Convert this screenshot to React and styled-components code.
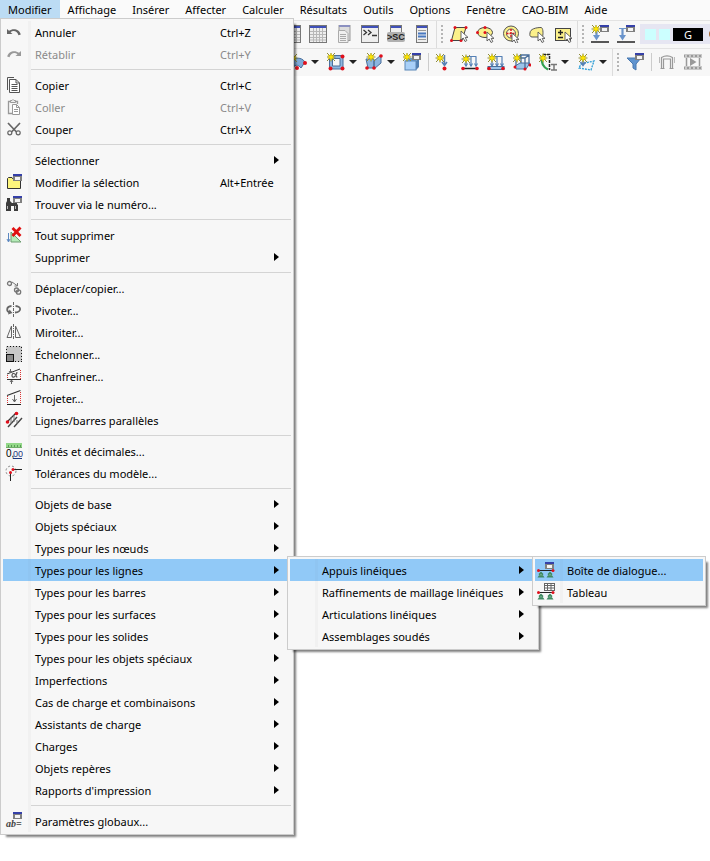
import React from 'react';
import styled, { createGlobalStyle } from 'styled-components';

const GlobalStyle = createGlobalStyle`
  *, *::before, *::after {
    box-sizing: border-box;
  }
  body {
    margin: 0;
    background: #fff;
    color: #000;
    font-family: "Noto Sans", "Open Sans", sans-serif;
    font-size: 11px;
    line-height: 16px;
    overflow: hidden;
  }
  button {
    margin: 0;
    padding: 0;
    border: none;
    background: transparent;
    color: inherit;
    font: inherit;
    text-align: left;
  }
`;

const Window = styled.div`
  min-height: 100vh;
  overflow: hidden;
`;

const MenuBar = styled.nav`
  display: flex;
  height: 20px;
  background: #fafafa;
`;

const MenuAnchor = styled.div`
  position: relative;
  z-index: 10;
`;

const MenuTitle = styled.button`
  height: 20px;
  padding: 0 8px;
  line-height: 20px;
  white-space: nowrap;
  background: ${props => props.$open ? '#bcdcf4' : 'transparent'};
`;

const Menu = styled.ul`
  position: absolute;
  top: ${props => props.$nested ? '-3px' : '18px'};
  left: ${props => props.$nested ? 'calc(100% - 4px)' : '0'};
  z-index: 1;
  width: ${props => props.$width}px;
  margin: 0;
  padding: 2px;
  list-style: none;
  background: #f7f7f7;
  border: 1px solid #ccc;
  box-shadow: 4px 4px 2px -2px rgba(0, 0, 0, 0.5);
`;

const Entry = styled.li`
  position: relative;
`;

const Item = styled.button`
  display: flex;
  align-items: center;
  width: 100%;
  height: 22px;
  padding-right: 12px;
  white-space: nowrap;
  color: ${props => props.disabled ? '#8a8a8a' : '#000'};
  background: ${props => props.$active ? '#91c9f7' : 'transparent'};
`;

const Gutter = styled.span`
  display: flex;
  align-items: center;
  flex: none;
  width: 28px;
  height: 22px;
  padding-left: 2px;
  border-right: 3px solid ${props => props.$active ? '#8fc5f2' : '#f1f1f1'};
`;

const Label = styled.span`
  flex: 1;
  padding: 2px 0 0 4px;
`;

const Shortcut = styled.span`
  width: 59px;
  padding-top: 2px;
`;

const Caret = styled.span`
  border: 4px solid transparent;
  border-left: 5px solid #000;
  border-right: none;
`;

const Separator = styled.li`
  display: flex;
  align-items: center;
  height: 9px;
  &::before {
    content: '';
    width: 28px;
    height: 9px;
    border-right: 3px solid #f1f1f1;
  }
  &::after {
    content: '';
    flex: 1;
    height: 1px;
    background: #d4d4d4;
  }
`;

const ToolBar = styled.div`
  display: flex;
  align-items: flex-start;
  height: 28px;
  padding-left: ${props => props.$start}px;
  background: #f7f7f7;
  border-top: 1px solid #e3e3e3;
`;

const Tool = styled.button`
  display: flex;
  align-items: center;
  justify-content: center;
  flex: none;
  width: 26px;
  height: 26px;
`;

const DropArrow = styled.button`
  flex: none;
  width: 12px;
  height: 26px;
  &::after {
    content: '';
    display: block;
    width: 8px;
    border: 4px solid transparent;
    border-top-color: #222;
    border-bottom: none;
  }
`;

const Divider = styled.span`
  flex: none;
  width: 6px;
  height: 26px;
  background: linear-gradient(#ccc, #ccc) center / 1px 18px no-repeat;
`;

const Grip = styled.span`
  display: flex;
  align-items: center;
  flex: none;
  width: 11px;
  height: 27px;
  padding-left: 1px;
  &::before {
    content: '';
    width: 1px;
    height: 27px;
    margin-right: 4px;
    background: #dcdcdc;
  }
  &::after {
    content: '';
    width: 2px;
    height: 20px;
    background: repeating-linear-gradient(#b5b5b5 0 2px, transparent 2px 4px);
  }
`;

const CaseSelect = styled.button`
  display: flex;
  align-items: center;
  flex: 1;
  gap: 3px;
  height: 20px;
  margin: 3px 0 0 1px;
  padding-left: 5px;
  overflow: hidden;
  background: #e6e6f2;
`;

const Swatch = styled.span`
  flex: none;
  width: 11px;
  height: 11px;
  background: #ccffff;
`;

const CaseTag = styled.span`
  flex: none;
  width: 30px;
  height: 13px;
  line-height: 13px;
  text-align: center;
  color: #fff;
  background: #000;
`;

const CaseDot = styled.span`
  flex: none;
  width: 8px;
  height: 8px;
  margin-left: 3px;
  border-radius: 4px;
  background: #a5622a;
`;

/* shared icon pieces */

const Svg = ({ children }) => (
  <svg width="18" height="18" viewBox="0 0 18 18" fill="none" aria-hidden="true">{children}</svg>
);

const MiniWindow = ({ x = 9, y = 1 }) => (
  <g shapeRendering="crispEdges">
    <rect x={x} y={y} width="9" height="7" fill="#808080" />
    <rect x={x} y={y} width="9" height="2" fill="#3540a8" />
    <rect x={x + 2} y={y + 3} width="5" height="3" fill="#f4f4f4" />
  </g>
);

const Frame = ({ x = 0, width = 18, height = 18 }) => (
  <g shapeRendering="crispEdges">
    <rect x={x} y="0" width={width} height={height} fill="#777" />
    <rect x={x + 1} y="1" width={width - 2} height="2" fill="#3f50b8" />
    <rect x={x + 1} y="3" width={width - 2} height={height - 4} fill="#eee" />
  </g>
);

const Star = ({ x = 4, y = 5 }) => (
  <g transform={`translate(${x} ${y})`}>
    <path d="M-4-4L4 4M4-4L-4 4M0-4.5V4.5M-4.5 0H4.5" stroke="#8d8a3c" strokeWidth="1" />
    <path d="M0-3.500L1-1 3-2 1.800 0 3 2 1 1 0 3.500-1 1-3 2-1.800 0-3-2-1-1Z" fill="#ffe600" stroke="#d8c400" strokeWidth="0.500" />
  </g>
);

const Cursor = ({ x = 10, y = 7 }) => (
  <path
    transform={`translate(${x} ${y})`}
    d="M0 0V9L2.2 7 4 10.5 5.8 9.6 4.2 6.4H7Z"
    fill="#fff"
    stroke="#555"
    strokeWidth="0.9"
  />
);

const Dots = ({ points, r = 1.5 }) => points.map(([x, y]) => (
  <circle key={`${x}-${y}`} cx={x} cy={y} r={r} fill="#e0101c" />
));

const Supports = () => (
  <g>
    <path d="M1 9.500H16" stroke="#222" />
    <path d="M4 10.500L6.500 13 5.800 14 7.500 16.500H0.500L2.200 14 1.500 13ZM13 10.500L15.500 13 14.800 14 16.500 16.500H9.500L11.200 14 10.500 13Z" fill="#3f8a62" />
    <path d="M3 14.500L4 13.500 5 14.500M12 14.500L13 13.500 14 14.500" stroke="#9fd0b2" />
    <Dots points={[[1.5, 9.5], [16, 9.5]]} />
  </g>
);

const LoadArrows = () => (
  <g stroke="#5580b5" strokeWidth="1.200">
    <path d="M4 3.500H15.500M5 4V13M10 4V13M15 4V13" />
    <path d="M3.500 10.500L5 13 6.500 10.500M8.500 10.500L10 13 11.500 10.500M13.500 10.500L15 13 16.500 10.500" />
  </g>
);

/* menu icons */

const UndoIcon = () => (
  <Svg>
    <path d="M2 6V11H7.500L5.500 9.200C8 7.200 12 7.600 13.500 12.200L15.800 11.500C14.500 6 8 4.800 4 7.800Z" fill="#666" />
  </Svg>
);

const RedoIcon = () => (
  <Svg>
    <path d="M16 6V11H10.500L12.500 9.200C10 7.200 6 7.600 4.500 12.200L2.200 11.500C3.500 6 10 4.800 14 7.800Z" fill="#999" />
  </Svg>
);

const CopyIcon = () => (
  <Svg>
    <path d="M2.500 14V1.500H9" stroke="#555" />
    <path d="M4.500 3.500H11L14.500 7V16.500H4.500Z" fill="#fff" stroke="#555" />
    <path d="M11 3.500V7H14.500M6.500 8.500H12.500M6.500 10.500H12.500M6.500 12.500H12.500M6.500 14.500H12.500" stroke="#555" />
  </Svg>
);

const PasteIcon = () => (
  <Svg>
    <path d="M7 15.500H3.500V3.500H12.500V6" stroke="#999" strokeWidth="1.300" />
    <path d="M5.500 4.500V2.500H7L8 1.500 9 2.500H10.500V4.500Z" fill="#eee" stroke="#999" />
    <path d="M7.500 6.500H11.500L14.500 9.500V16.500H7.500Z" fill="#fff" stroke="#999" />
    <path d="M11.500 6.500V9.500H14.500M9 11.500H13M9 13.500H13" stroke="#999" />
  </Svg>
);

const CutIcon = () => (
  <Svg>
    <path d="M3 3L11.500 12M15 3L6.500 12" stroke="#666" strokeWidth="1.700" />
    <circle cx="4.800" cy="12.800" r="2" stroke="#666" strokeWidth="1.200" />
    <circle cx="13.200" cy="12.800" r="2" stroke="#666" strokeWidth="1.200" />
  </Svg>
);

const EditSelectionIcon = () => (
  <Svg>
    <path d="M2.500 15.500V5.500L3.500 4.500H7L8 6H15.500V15.500Z" fill="#fdf57c" stroke="#333" />
    <MiniWindow x={8} />
  </Svg>
);

const FindIcon = () => (
  <Svg>
    <path d="M2 3H5V6L7 8H9V5H12V9L13 10V16H9V11H6V16H1V8L2 6Z" fill="#3c3c3c" />
    <path d="M2.500 11V14M10.500 11V14" stroke="#bbb" />
    <MiniWindow x={8} />
  </Svg>
);

const DeleteAllIcon = () => (
  <Svg>
    <path d="M3.500 7V15M2 13L3.500 16 5 13" stroke="#5b87c0" />
    <path d="M6 6V16H16Z" fill="#b5ecb8" stroke="#6d9c70" />
    <path d="M7.500 2L15.500 10M15.500 1.500L7.500 10" stroke="#e01010" strokeWidth="2.800" />
  </Svg>
);

const MoveIcon = () => (
  <Svg>
    <circle cx="4.500" cy="4.500" r="2" stroke="#777" strokeWidth="1.300" />
    <circle cx="11.500" cy="11" r="2" stroke="#777" strokeWidth="1.300" />
    <circle cx="13.500" cy="13" r="2.200" stroke="#777" strokeWidth="1.300" />
    <path d="M7 3L12 6.500M12.500 4V7H9.500" stroke="#777" />
  </Svg>
);

const RotateIcon = () => (
  <Svg>
    <path d="M8.500 1V17" stroke="#666" strokeDasharray="3 1 1 1" />
    <path d="M6.500 5C1 5.500 1 10.500 5 11.500M10.500 5C17 5.500 16.500 11 10 11.500" stroke="#666" strokeWidth="1.800" />
    <path d="M3 13.500L7.500 12 4.500 8.500Z" fill="#666" />
  </Svg>
);

const MirrorIcon = () => (
  <Svg>
    <path d="M8.500 1V17" stroke="#666" strokeDasharray="3 1 1 1" />
    <path d="M6.500 3V14.500H2ZM10.500 3V14.500H15.500Z" stroke="#666" />
  </Svg>
);

const ScaleIcon = () => (
  <Svg>
    <g shapeRendering="crispEdges">
      <rect x="1" y="1" width="16" height="16" fill="#c8c8c8" />
      <rect x="1.500" y="1.500" width="15" height="15" stroke="#111" strokeDasharray="1 2" />
      <rect x="1.500" y="9.500" width="7" height="7" fill="#888" stroke="#111" />
    </g>
  </Svg>
);

const ChamferIcon = () => (
  <Svg>
    <path d="M2 7L15 2M2 12.500H16" stroke="#333" />
    <path d="M2.500 8V12M15.500 3V12" stroke="#d33" strokeDasharray="1 1" />
    <path d="M12 5C11 10.500 7 11.500 7 8.500 7 5.500 10.500 5.500 12 10.500" stroke="#555" strokeWidth="1.200" />
    <path d="M5.500 2V6M4 4L5.500 6 7 4M6.500 17V13M5 15L6.500 13 8 15" stroke="#666" />
  </Svg>
);

const ProjectIcon = () => (
  <Svg>
    <path d="M2 6.500L15.500 1.500" stroke="#333" strokeWidth="1.200" />
    <path d="M2 15.500H16" stroke="#222" />
    <path d="M2.500 7V15M15.500 3V15" stroke="#d33" strokeDasharray="1 1" />
    <path d="M9.500 6V13M7.500 10L9.500 13 11.500 10" stroke="#666" />
  </Svg>
);

const ParallelIcon = () => (
  <Svg>
    <path d="M2 11L11 2" stroke="#333" strokeWidth="1.300" />
    <path d="M3 16L12 6M9 16L17 7" stroke="#444" strokeWidth="1.400" />
    <path d="M6 6V13M9 4V11M12 9V13" stroke="#777" />
    <Dots points={[[2.5, 11], [11.5, 2.5]]} r={1.8} />
  </Svg>
);

const SvgText = styled.text`
  font-family: ${props => props.$serif ? '"Liberation Serif", serif' : '"Liberation Sans", sans-serif'};
  font-size: ${props => props.$size}px;
  font-style: ${props => props.$serif ? 'italic' : 'normal'};
  font-weight: ${props => props.$bold ? 'bold' : 'normal'};
`;

const UnitsIcon = () => (
  <Svg>
    <rect x="1" y="1" width="16" height="5" fill="#93d889" />
    <path d="M1 5.500H17" stroke="#6fae68" />
    <path d="M3.500 3V5M6.500 3V5M9.500 3V5M12.500 3V5M15.500 3V5" stroke="#5a9c55" />
    <SvgText x="1" y="15" $size={10} fill="#000">0,</SvgText>
    <SvgText x="8" y="15" $size={9} fill="#1f3a80">00</SvgText>
    <path d="M8 16.500H17" stroke="#1f3a80" />
  </Svg>
);

const ToleranceIcon = () => (
  <Svg>
    <circle cx="6" cy="7" r="5" stroke="#888" strokeDasharray="2 2" />
    <path d="M8 5.500H17M5.500 9V17" stroke="#222" />
    <Dots points={[[8, 5.5], [5.5, 8.5]]} />
  </Svg>
);

const GlobalParamsIcon = () => (
  <Svg>
    <MiniWindow x={8} y={0} />
    <SvgText x="1" y="15" $size={10} $serif $bold fill="#444">ab=</SvgText>
  </Svg>
);

const SupportDialogIcon = () => (
  <Svg>
    <Supports />
    <MiniWindow x={8} />
  </Svg>
);

const SupportTableIcon = () => (
  <Svg>
    <Supports />
    <rect x="7.500" y="0.500" width="10" height="7" fill="#fff" stroke="#666" />
    <path d="M7.500 2.500H17.500M7.500 5H17.500M10.500 0.500V7.500M14 0.500V7.500" stroke="#666" />
  </Svg>
);

/* toolbar icons */

const TableIcon = () => (
  <Svg>
    <Frame />
    <path d="M1 6.500H17M1 9.500H17M1 12.500H17M1 15H17M4.500 3V17M7.500 3V17M10.500 3V17M13.500 3V17" stroke="#b8b8b8" />
  </Svg>
);

const ReportIcon = () => (
  <Svg>
    <rect x="4" y="0.500" width="11" height="15" fill="#ddd" stroke="#999" />
    <rect x="4" y="0" width="11" height="2" fill="#8b90c0" />
    <path d="M3.500 5.500H10L13 8.500V17.500H3.500Z" fill="#f0f0f0" stroke="#aaa" />
    <path d="M5 9.500H11M5 11.500H11M5 13.500H11M5 15.500H11" stroke="#aaa" />
  </Svg>
);

const ConsoleIcon = () => (
  <Svg>
    <Frame />
    <path d="M2.500 5L5.500 7.500 2.500 10M7 5L10 7.500 7 10M11 10.500H16" stroke="#333" strokeWidth="1.300" />
  </Svg>
);

const ScriptIcon = () => (
  <Svg>
    <Frame x={3} width={12} height={10} />
    <rect x="0" y="7" width="18" height="10" rx="2" fill="#b0b0b0" />
    <SvgText x="0" y="15" $size={9} $bold fill="#222">&gt;SC</SvgText>
  </Svg>
);

const NavigatorIcon = () => (
  <Svg>
    <Frame x={3} width={12} />
    <path d="M5 5.500H13M5 14.500H13" stroke="#999" />
    <path d="M5 8.500H13M5 11.500H13" stroke="#4878c0" strokeWidth="2" />
  </Svg>
);

const SelectPolygonIcon = () => (
  <Svg>
    <path d="M5 2.500H16L12 15.500H1.500Z" fill="#fbf08a" stroke="#444" />
    <Dots points={[[5, 2.5], [16, 2.5], [1.5, 15.5], [11, 15.5]]} />
    <Cursor x={11} y={6} />
  </Svg>
);

const SelectEllipseIcon = () => (
  <Svg>
    <ellipse cx="9" cy="7.500" rx="7.500" ry="5" fill="#fbf08a" stroke="#444" />
    <Dots points={[[1.5, 7.5], [9, 7.5], [9, 2.5]]} />
    <Cursor x={11} y={7} />
  </Svg>
);

const SelectRingIcon = () => (
  <Svg>
    <circle cx="9" cy="8.500" r="7.500" fill="#fbf08a" stroke="#555" />
    <circle cx="9" cy="8.500" r="4.500" fill="#fff8d0" stroke="#555" />
    <path d="M9 4V13M4.500 8.500H13.500" stroke="#e0101c" strokeWidth="1.500" strokeDasharray="2 1" />
    <Cursor x={10} y={8} />
  </Svg>
);

const SelectLassoIcon = () => (
  <Svg>
    <path d="M2 8C2 4 8 2.500 13 2.500 15 2.500 15.500 8 14.500 12H4C2 12 1.500 10 2 8Z" fill="#fbf08a" stroke="#555" />
    <Cursor x={10} y={7} />
  </Svg>
);

const SelectValueIcon = () => (
  <Svg>
    <rect x="1.500" y="3.500" width="15" height="12" fill="#fbf08a" stroke="#444" />
    <path d="M4 7.500H9M6.500 5V10M4 12.500H9" stroke="#222" strokeWidth="1.300" />
    <Cursor x={11} y={7} />
  </Svg>
);

const LoadCaseIcon = ({ isNew }) => (
  <Svg>
    <path d="M5.500 3V12" stroke="#6a94cc" strokeWidth="2.200" />
    <path d="M2 10H9L5.500 15.500Z" fill="#6a94cc" />
    <path d="M0 17H18" stroke="#222" strokeWidth="1.500" />
    {isNew ? <Star x={5} y={4} /> : <path d="M2 3.500H9" stroke="#6a94cc" />}
    <MiniWindow y={0} />
  </Svg>
);

const SurfaceIcon = () => (
  <Svg>
    <path d="M1 12C3 4 12 3 16 9L12 15C9 11 5 11 3 17Z" fill="#7fa9d8" stroke="#456d9b" />
    <Star />
    <Dots points={[[8, 15], [16, 10]]} r={2} />
  </Svg>
);

const OpeningIcon = () => (
  <Svg>
    <path d="M2.500 2.500H16V16H2.500ZM5.500 5.500V13H13V5.500Z" fill="#8db6df" fillRule="evenodd" stroke="#4a6f9b" />
    <Star x={4} y={4} />
    <Dots points={[[15.5, 3.5], [15.5, 15.5], [3.5, 15.5]]} r={2} />
  </Svg>
);

const FoldIcon = () => (
  <Svg>
    <path d="M1 6H9V15H3ZM9 8L16 2V10L9 16Z" fill="#8db6df" stroke="#4a6f9b" />
    <Star x={6} y={4} />
    <Dots points={[[2, 15], [9, 15], [16, 3]]} r={1.8} />
  </Svg>
);

const SolidIcon = () => (
  <Svg>
    <path d="M2 8L5 5H16L13 8Z" fill="#6c9ac8" />
    <path d="M13 8L16 5V14L13 17Z" fill="#527fb0" />
    <rect x="2" y="8" width="11" height="9" fill="#a9d0f8" stroke="#5b87b8" />
    <Star x={4} y={4} />
    <MiniWindow y={0} />
  </Svg>
);

const NodeLoadIcon = () => (
  <Svg>
    <path d="M9.500 2V12M7 9L9.500 12.500 12 9" stroke="#5580b5" strokeWidth="1.500" />
    <Star x={5} y={5} />
    <Dots points={[[9.5, 15.5]]} r={2} />
  </Svg>
);

const LineLoadIcon = () => (
  <Svg>
    <LoadArrows />
    <path d="M2 15.500H16" stroke="#222" strokeWidth="1.500" />
    <Star x={5} y={6} />
    <Dots points={[[2, 15.5], [16, 15.5]]} r={1.800} />
  </Svg>
);

const MemberLoadIcon = () => (
  <Svg>
    <LoadArrows />
    <rect x="1" y="13.500" width="16" height="3" fill="#9cc4ea" stroke="#4a6f9b" />
    <Star x={5} y={5} />
    <Dots points={[[2, 15.5], [16, 15.5]]} r={1.800} />
  </Svg>
);

const SurfaceLoadIcon = () => (
  <Svg>
    <path d="M2 13L7 10H17L13 16H3Z" fill="#9cc4ea" stroke="#4a6f9b" />
    <path d="M3 5L8 2H16V12M3 5H12L16 2M3 5V13M12 5V15M8 2V10" stroke="#4a6f9b" strokeWidth="1.300" />
    <Star x={4} y={5} />
    <Dots points={[[2, 14], [12, 16], [17, 12]]} />
  </Svg>
);

const ImperfectionIcon = () => (
  <Svg>
    <path d="M3 3C2 9 4 14 9 16.500" stroke="#30a050" strokeWidth="2.200" />
    <path d="M4 1.500H10.500V17" stroke="#222" strokeWidth="1.500" strokeDasharray="3 1" />
    <path d="M12 11.500H18M12 17H18M15 11.500V17" stroke="#777" strokeWidth="1.500" />
    <Star x={4} y={5} />
  </Svg>
);

const FreeLoadIcon = () => (
  <Svg>
    <path d="M4 11L17 8 14 17 2 15Z" stroke="#2f9fd6" strokeWidth="1.300" strokeDasharray="2 1" />
    <path d="M6 3V12M3.500 9L6 12.500 8.500 9" stroke="#5580b5" strokeWidth="1.500" />
    <Star x={6} y={5} />
  </Svg>
);

const FilterIcon = () => (
  <Svg>
    <path d="M1 5H15L10 11V17L7 15V11Z" fill="#5f93cf" stroke="#4878b0" />
    <MiniWindow y={0} />
  </Svg>
);

const FrameIcon = () => (
  <Svg>
    <path d="M3.500 15V4.500C7 2.500 11 2.500 14.500 4.500V15M5.500 15V6H12.500V15M2.500 15.500H6.500M11.500 15.500H15.500" stroke="#999" strokeWidth="1.200" />
    <path d="M1.500 4V10M16.500 4V10" stroke="#bbb" />
  </Svg>
);

const FilmIcon = () => (
  <Svg>
    <path d="M0 3H18M0 15H18" stroke="#999" strokeWidth="3" />
    <path d="M1 3H18M1 15H18" stroke="#f7f7f7" strokeWidth="1.200" strokeDasharray="2 2" />
    <path d="M2.500 5V13M15.500 5V13" stroke="#999" strokeWidth="1.500" />
    <path d="M6 5L12.500 9 6 13Z" fill="#999" />
  </Svg>
);

const titles = ['Affichage', 'Insérer', 'Affecter', 'Calculer', 'Résultats', 'Outils', 'Options', 'Fenêtre', 'CAO-BIM', 'Aide'];

const supportItems = [
  { label: 'Boîte de dialogue...', icon: SupportDialogIcon, active: true },
  { label: 'Tableau', icon: SupportTableIcon },
];

const lineItems = [
  { label: 'Appuis linéiques', active: true, arrow: true, submenu: supportItems, width: 174 },
  { label: 'Raffinements de maillage linéiques', arrow: true },
  { label: 'Articulations linéiques', arrow: true },
  { label: 'Assemblages soudés', arrow: true },
];

const editItems = [
  { label: 'Annuler', shortcut: 'Ctrl+Z', icon: UndoIcon },
  { label: 'Rétablir', shortcut: 'Ctrl+Y', icon: RedoIcon, disabled: true },
  null,
  { label: 'Copier', shortcut: 'Ctrl+C', icon: CopyIcon },
  { label: 'Coller', shortcut: 'Ctrl+V', icon: PasteIcon, disabled: true },
  { label: 'Couper', shortcut: 'Ctrl+X', icon: CutIcon },
  null,
  { label: 'Sélectionner', arrow: true },
  { label: 'Modifier la sélection', shortcut: 'Alt+Entrée', icon: EditSelectionIcon },
  { label: 'Trouver via le numéro...', icon: FindIcon },
  null,
  { label: 'Tout supprimer', icon: DeleteAllIcon },
  { label: 'Supprimer', arrow: true },
  null,
  { label: 'Déplacer/copier...', icon: MoveIcon },
  { label: 'Pivoter...', icon: RotateIcon },
  { label: 'Miroiter...', icon: MirrorIcon },
  { label: 'Échelonner...', icon: ScaleIcon },
  { label: 'Chanfreiner...', icon: ChamferIcon },
  { label: 'Projeter...', icon: ProjectIcon },
  { label: 'Lignes/barres parallèles', icon: ParallelIcon },
  null,
  { label: 'Unités et décimales...', icon: UnitsIcon },
  { label: 'Tolérances du modèle...', icon: ToleranceIcon },
  null,
  { label: 'Objets de base', arrow: true },
  { label: 'Objets spéciaux', arrow: true },
  { label: 'Types pour les nœuds', arrow: true },
  { label: 'Types pour les lignes', active: true, arrow: true, submenu: lineItems, width: 252 },
  { label: 'Types pour les barres', arrow: true },
  { label: 'Types pour les surfaces', arrow: true },
  { label: 'Types pour les solides', arrow: true },
  { label: 'Types pour les objets spéciaux', arrow: true },
  { label: 'Imperfections', arrow: true },
  { label: 'Cas de charge et combinaisons', arrow: true },
  { label: 'Assistants de charge', arrow: true },
  { label: 'Charges', arrow: true },
  { label: 'Objets repères', arrow: true },
  { label: "Rapports d'impression", arrow: true },
  null,
  { label: 'Paramètres globaux...', icon: GlobalParamsIcon },
];

// items: null entries are separators
function MenuList ({ items, width, nested }) {
  return (
    <Menu $width={width} $nested={nested}>
      {items.map((item, index) => {
        if (!item) return <Separator key={index} />;
        const Icon = item.icon;
        return (
          <Entry key={item.label}>
            <Item $active={item.active} disabled={item.disabled}>
              <Gutter $active={item.active}>{Boolean(Icon) && <Icon />}</Gutter>
              <Label>{item.label}</Label>
              {Boolean(item.shortcut) && <Shortcut>{item.shortcut}</Shortcut>}
              {Boolean(item.arrow) && <Caret />}
            </Item>
            {Boolean(item.submenu) && <MenuList items={item.submenu} width={item.width} nested />}
          </Entry>
        );
      })}
    </Menu>
  );
}

function ToolButton ({ icon: Icon, label, drop, ...rest }) {
  return (
    <>
      <Tool aria-label={label}><Icon {...rest} /></Tool>
      {Boolean(drop) && <DropArrow aria-label={`${label} : options`} />}
    </>
  );
}

function App () {
  return (
    <Window>
      <GlobalStyle />
      <MenuBar>
        <MenuAnchor>
          <MenuTitle $open>Modifier</MenuTitle>
          <MenuList items={editItems} width={294} />
        </MenuAnchor>
        {titles.map(title => <MenuTitle key={title}>{title}</MenuTitle>)}
      </MenuBar>
      <ToolBar $start={279}>
        <ToolButton icon={TableIcon} label="Navigateur" />
        <ToolButton icon={TableIcon} label="Tableaux" />
        <ToolButton icon={ReportIcon} label="Rapport" />
        <ToolButton icon={ConsoleIcon} label="Console" />
        <ToolButton icon={ScriptIcon} label="Script" />
        <ToolButton icon={NavigatorIcon} label="Panneau" />
        <Grip />
        <ToolButton icon={SelectPolygonIcon} label="Sélection par polygone" />
        <ToolButton icon={SelectEllipseIcon} label="Sélection par ellipse" />
        <ToolButton icon={SelectRingIcon} label="Sélection par anneau" />
        <ToolButton icon={SelectLassoIcon} label="Sélection libre" />
        <ToolButton icon={SelectValueIcon} label="Sélection par valeur" />
        <Grip />
        <ToolButton icon={LoadCaseIcon} label="Nouveau cas de charge" isNew />
        <ToolButton icon={LoadCaseIcon} label="Cas de charge" />
        <CaseSelect aria-label="Cas de charge actif">
          <Swatch />
          <Swatch />
          <CaseTag>G</CaseTag>
          <CaseDot />
        </CaseSelect>
      </ToolBar>
      <ToolBar $start={285}>
        <ToolButton icon={SurfaceIcon} label="Surface" drop />
        <ToolButton icon={OpeningIcon} label="Ouverture" drop />
        <ToolButton icon={FoldIcon} label="Surfaces pliées" drop />
        <ToolButton icon={SolidIcon} label="Solide" />
        <Divider />
        <ToolButton icon={NodeLoadIcon} label="Charge nodale" />
        <ToolButton icon={LineLoadIcon} label="Charge linéique" />
        <ToolButton icon={MemberLoadIcon} label="Charge de barre" />
        <ToolButton icon={SurfaceLoadIcon} label="Charge surfacique" />
        <ToolButton icon={ImperfectionIcon} label="Imperfection" drop />
        <ToolButton icon={FreeLoadIcon} label="Charge libre" drop />
        <Grip />
        <ToolButton icon={FilterIcon} label="Filtre" />
        <Divider />
        <ToolButton icon={FrameIcon} label="Structure" />
        <ToolButton icon={FilmIcon} label="Animation" />
      </ToolBar>
    </Window>
  );
}

export default App;
